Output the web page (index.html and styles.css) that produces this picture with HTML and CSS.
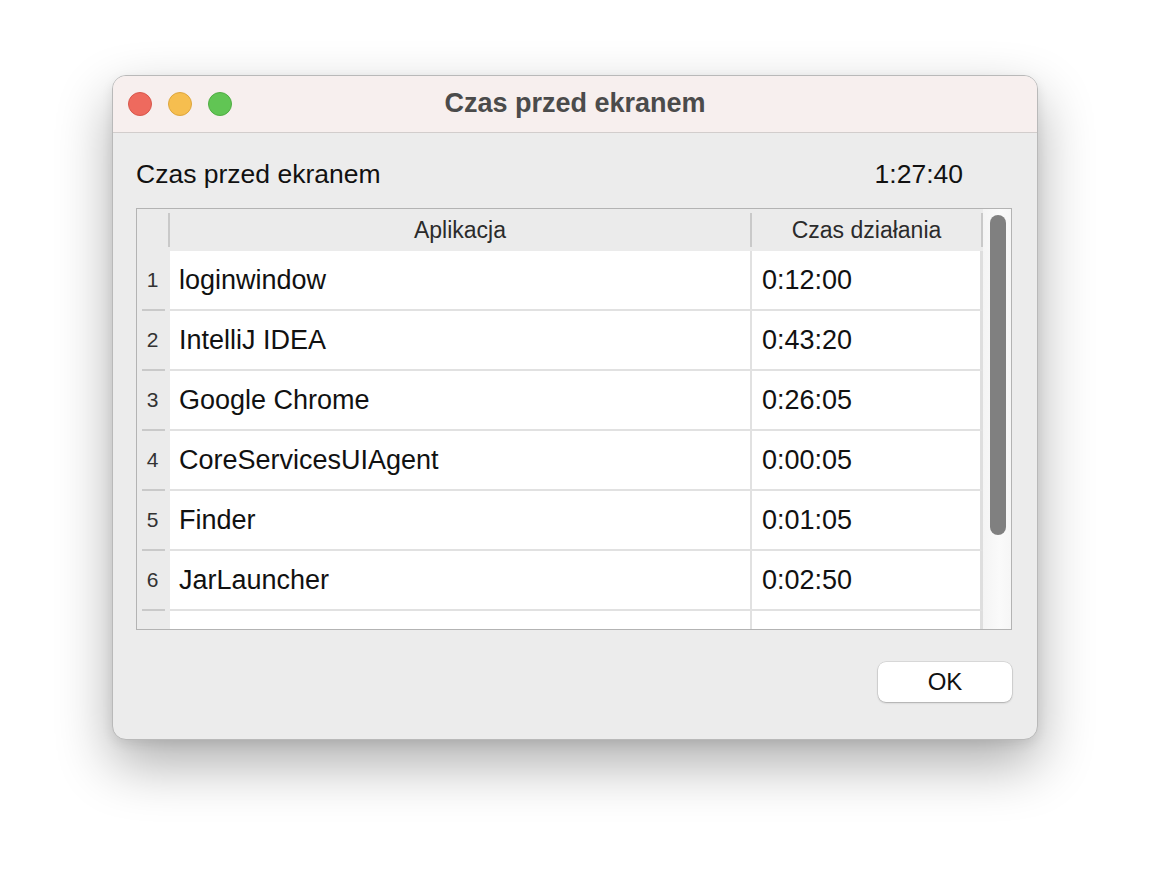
FILE: index.html
```html
<!DOCTYPE html>
<html lang="pl">
<head>
<meta charset="utf-8">
<title>Czas przed ekranem</title>
<link rel="stylesheet" href="styles.css">
</head>
<body>
<div class="window">
  <div class="titlebar">
    <div class="lights">
      <span class="light red"></span>
      <span class="light yellow"></span>
      <span class="light green"></span>
    </div>
    <div class="title">Czas przed ekranem</div>
  </div>
  <div class="content">
    <div class="summary">
      <span>Czas przed ekranem</span>
      <span>1:27:40</span>
    </div>
    <div class="table">
      <div class="grid">
        <div class="hcell rh"><span class="hlabel"></span><span class="sep"></span></div>
        <div class="hcell"><span class="hlabel">Aplikacja</span><span class="sep"></span></div>
        <div class="hcell"><span class="hlabel">Czas działania</span><span class="sep"></span></div>

        <div class="rowhead"><span class="num">1</span><span class="tick"></span></div>
        <div class="cell app">loginwindow</div>
        <div class="cell time">0:12:00</div>

        <div class="rowhead"><span class="num">2</span><span class="tick"></span></div>
        <div class="cell app">IntelliJ IDEA</div>
        <div class="cell time">0:43:20</div>

        <div class="rowhead"><span class="num">3</span><span class="tick"></span></div>
        <div class="cell app">Google Chrome</div>
        <div class="cell time">0:26:05</div>

        <div class="rowhead"><span class="num">4</span><span class="tick"></span></div>
        <div class="cell app">CoreServicesUIAgent</div>
        <div class="cell time">0:00:05</div>

        <div class="rowhead"><span class="num">5</span><span class="tick"></span></div>
        <div class="cell app">Finder</div>
        <div class="cell time">0:01:05</div>

        <div class="rowhead"><span class="num">6</span><span class="tick"></span></div>
        <div class="cell app">JarLauncher</div>
        <div class="cell time">0:02:50</div>

        <div class="rowhead"><span class="num"></span><span class="tick"></span></div>
        <div class="cell app"></div>
        <div class="cell time"></div>
      </div>
      <div class="track"><div class="thumb"></div></div>
    </div>
    <div class="footer">
      <button class="ok">OK</button>
    </div>
  </div>
</div>
</body>
</html>
```

FILE: styles.css
```css
html, body {
  margin: 0;
  padding: 0;
  background: #ffffff;
}
body {
  font-family: "Liberation Sans", Arial, sans-serif;
  padding-top: 75px;
  padding-left: 112px;
  height: 888px;
  box-sizing: border-box;
  overflow: hidden;
}
.window {
  width: 926px;
  height: 665px;
  box-sizing: border-box;
  border: 1px solid #b9b9b9;
  border-radius: 14px;
  background: #ececec;
  box-shadow: 0 24px 55px rgba(0,0,0,0.32), 0 4px 12px rgba(0,0,0,0.08);
  overflow: hidden;
  display: flex;
  flex-direction: column;
}
.titlebar {
  height: 56px;
  flex: 0 0 56px;
  background: #f7efee;
  border-bottom: 1px solid #d2cdcc;
  display: flex;
  align-items: center;
  position: relative;
}
.lights {
  display: flex;
  gap: 16px;
  padding-left: 15px;
}
.light {
  width: 24px;
  height: 24px;
  border-radius: 50%;
  box-sizing: border-box;
}
.red { background: #ee6a5e; border: 1px solid #d8574c; }
.yellow { background: #f6be4f; border: 1px solid #dea63d; }
.green { background: #61c554; border: 1px solid #50ad43; }
.title {
  position: absolute;
  left: 0;
  right: 0;
  top: 0;
  bottom: 0;
  display: flex;
  align-items: center;
  justify-content: center;
  font-weight: bold;
  font-size: 27px;
  color: #4b4b4b;
  padding-bottom: 2px;
  pointer-events: none;
}
.content {
  padding: 26px 25px 37px 23px;
  display: flex;
  flex-direction: column;
}
.summary {
  display: flex;
  justify-content: space-between;
  font-size: 26.5px;
  line-height: 30px;
  color: #111;
  padding-right: 49px;
}
.table {
  margin-top: 19px;
  height: 422px;
  box-sizing: border-box;
  border: 1px solid #b3b3b3;
  background: #ffffff;
  display: flex;
  overflow: hidden;
}
.grid {
  width: 846px;
  display: grid;
  grid-template-columns: 33px 582px 231px;
  grid-template-rows: 42px;
  grid-auto-rows: 60px;
  overflow: hidden;
}
.hcell {
  background: #ebebeb;
  display: flex;
  align-items: center;
}
.hlabel {
  flex: 1;
  text-align: center;
  font-size: 23px;
  color: #2b2b2b;
}
.sep {
  width: 2px;
  height: 34px;
  background: #c9c9c9;
}
.rowhead {
  background: #ebebeb;
  display: flex;
  flex-direction: column;
  align-items: center;
}
.num {
  flex: 1;
  display: flex;
  align-items: center;
  font-size: 21px;
  color: #333;
  padding-right: 2px;
}
.tick {
  width: 23px;
  height: 2px;
  background: #c9c9c9;
}
.cell {
  background: #fff;
  border-bottom: 2px solid #e1e1e1;
  display: flex;
  align-items: center;
  font-size: 27px;
  color: #111;
}
.app {
  border-right: 2px solid #e1e1e1;
  padding-left: 9px;
}
.time {
  border-right: 3px solid #dedede;
  padding-left: 10px;
}
.track {
  flex: 1;
  background: linear-gradient(to right, #f4f4f4, #fafafa 60%, #f6f6f6);
  padding: 6px 0 0 7px;
}
.thumb {
  width: 16px;
  height: 320px;
  border-radius: 8px;
  background: #808080;
}
.footer {
  margin-top: 32px;
  display: flex;
  justify-content: flex-end;
}
.ok {
  width: 134px;
  height: 40px;
  border: none;
  border-radius: 8px;
  background: #ffffff;
  box-shadow: 0 0 0 0.5px rgba(0,0,0,0.15), 0 1px 2px rgba(0,0,0,0.22);
  font-family: "Liberation Sans", Arial, sans-serif;
  font-size: 24px;
  color: #111;
  padding: 0;
}
```
